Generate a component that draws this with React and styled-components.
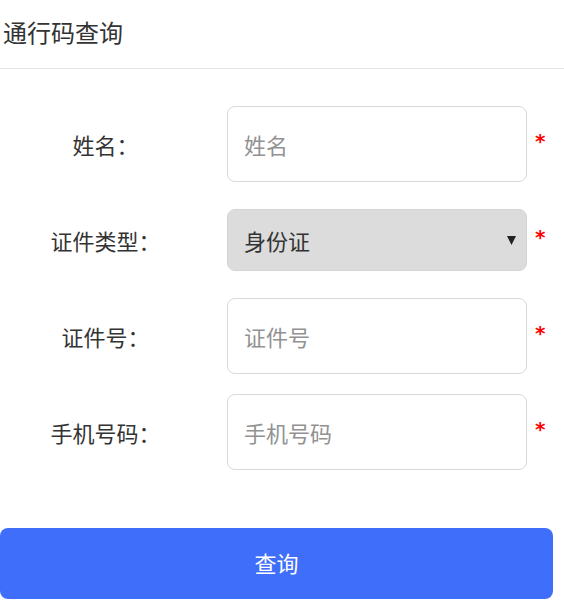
import React from 'react';
import styled, { createGlobalStyle } from 'styled-components';

const GlobalStyle = createGlobalStyle`
  html, body {
    margin: 0;
    padding: 0;
    background: #fff;
  }
  body {
    font-family: "Noto Sans CJK SC", "Noto Sans", sans-serif;
    color: #333;
  }
  * { box-sizing: border-box; }
`;

const fields = [
  { label: '姓名：', placeholder: '姓名' },
  { label: '证件类型：', select: '身份证' },
  { label: '证件号：', placeholder: '证件号' },
  { label: '手机号码：', placeholder: '手机号码' },
];

const App = () => {
  return (
    <Page>
      <GlobalStyle />
      <Header>
        <Title>通行码查询</Title>
      </Header>
      <Form>
        {fields.map((f) => (
          <Row key={f.label}>
            <Label>{f.label}</Label>
            {f.select ? (
              <SelectBox role="combobox">
                <span>{f.select}</span>
                <svg width="9" height="9" viewBox="0 0 9 9">
                  <polygon points="0,0 9,0 4.5,9" fill="#222" />
                </svg>
              </SelectBox>
            ) : (
              <Input placeholder={f.placeholder} />
            )}
            <Required>*</Required>
          </Row>
        ))}
      </Form>
      <SubmitButton>查询</SubmitButton>
    </Page>
  );
};

export default App;

const Page = styled.div`
  width: 564px;
  min-height: 607px;
`;

const Header = styled.div`
  height: 69px;
  padding: 15px 3px 0;
  border-bottom: 1px solid #e4e4e4;
`;

const Title = styled.h1`
  margin: 0;
  font-size: 24px;
  font-weight: 400;
  line-height: 34px;
  color: #333;
`;

const Form = styled.div`
  padding-top: 27px;
  display: flex;
  flex-direction: column;
`;

const Row = styled.div`
  height: 96px;
  display: flex;
  align-items: center;
`;

const Label = styled.div`
  width: 211px;
  text-align: center;
  font-size: 22px;
  color: #333;
`;

const Input = styled.input`
  margin-left: 16px;
  width: 300px;
  height: 76px;
  padding: 0 16px;
  border: 1px solid #d9d9d9;
  border-radius: 8px;
  font-family: inherit;
  font-size: 22px;
  color: #333;
  outline: none;
  &::placeholder {
    color: #929292;
  }
`;

const SelectBox = styled.div`
  margin-left: 16px;
  width: 300px;
  height: 62px;
  padding: 0 10px 0 16px;
  display: flex;
  align-items: center;
  justify-content: space-between;
  background: #dcdcdc;
  border: 1px solid #d4d4d4;
  border-radius: 8px;
  font-size: 22px;
  color: #333;
`;

const Required = styled.span`
  margin: 0 0 6px 8px;
  font-family: "DejaVu Sans", sans-serif;
  font-size: 20px;
  font-weight: 700;
  color: #f00;
  line-height: 1;
`;

const SubmitButton = styled.button`
  display: block;
  margin-top: 48px;
  width: 553px;
  height: 71px;
  padding-bottom: 4px;
  border: none;
  border-radius: 8px;
  background: #3f6ffa;
  color: #fff;
  font-family: inherit;
  font-size: 22px;
  cursor: pointer;
`;
